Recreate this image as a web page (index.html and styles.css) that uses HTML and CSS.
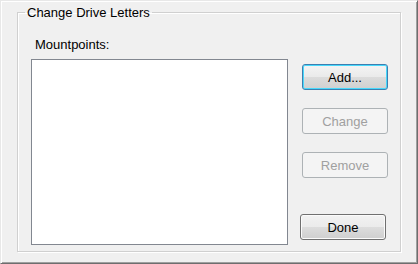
FILE: index.html
```html
<!DOCTYPE html>
<html lang="en">
<head>
    <meta charset="UTF-8">
    <title>Change Drive Letters</title>
    <link rel="stylesheet" href="styles.css">
</head>
<body>
    <div class="dialog">
        <fieldset class="group">
            <legend>Change Drive Letters</legend>
            <div class="group-body">
                <div class="list-column">
                    <label class="list-label">Mountpoints:</label>
                    <div class="listbox"></div>
                </div>
                <div class="button-column">
                    <button class="btn btn-default">Add...</button>
                    <button class="btn" disabled>Change</button>
                    <button class="btn" disabled>Remove</button>
                    <button class="btn btn-done">Done</button>
                </div>
            </div>
        </fieldset>
    </div>
</body>
</html>
```

FILE: styles.css
```css
* {
    margin: 0;
    padding: 0;
    box-sizing: border-box;
}

body {
    font-family: 'Liberation Sans', Arial, sans-serif;
    font-size: 13px;
    color: #000000;
    background: #f0f0f0;
}

.dialog {
    width: 418px;
    height: 264px;
    background: #f0f0f0;
    border: 1px solid;
    border-color: #e8e8e8 #6e6e6e #6e6e6e #e8e8e8;
    box-shadow: inset 1px 1px #ffffff, inset -1px -1px #a0a0a0;
    padding: 4px 16px 11px 16px;
    display: flex;
}

.group {
    flex: 1;
    border: 1px solid #d0d0d0;
    box-shadow: 1px 1px #ffffff, inset 1px 1px #ffffff;
    padding: 0;
}

.group legend {
    margin-left: 7px;
    padding: 0 2px;
    line-height: 15px;
}

.group-body {
    display: flex;
    height: 100%;
    padding: 0 12px 6px 13px;
}

.list-column {
    display: flex;
    flex-direction: column;
    width: 257px;
}

.list-label {
    padding: 17px 0 6px 4px;
    line-height: 16px;
}

.listbox {
    flex: 1;
    background: #ffffff;
    border: 1px solid #828790;
}

.button-column {
    display: flex;
    flex-direction: column;
    margin-left: 14px;
    padding-top: 44px;
}

.btn {
    width: 86px;
    height: 26px;
    margin-bottom: 18px;
    font-family: inherit;
    font-size: 13px;
    color: #000000;
    border: 1px solid #707070;
    border-radius: 3px;
    background: linear-gradient(#f2f2f2 0%, #ebebeb 50%, #dddddd 50%, #cfcfcf 100%);
    box-shadow: inset 0 0 0 1px #fbfbfb;
}

.btn-default {
    border-color: #3c7fb1;
    background: linear-gradient(#f4f4f4 0%, #eaeaea 50%, #dcdcdc 50%, #d0d0d0 100%);
    box-shadow: inset 0 0 0 1px #48d8fb;
}

.btn:disabled {
    color: #a0a0a0;
    border-color: #adb2b5;
    background: #f4f4f4;
    box-shadow: none;
}

.btn-done {
    margin-top: auto;
    margin-left: -2px;
    margin-bottom: 5px;
}
```
